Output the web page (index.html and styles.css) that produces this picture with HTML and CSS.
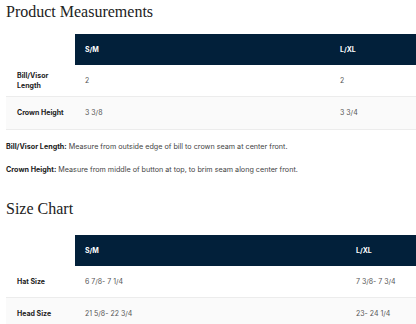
FILE: index.html
```html
<!DOCTYPE html>
<html lang="en">
<head>
<meta charset="UTF-8">
<meta name="viewport" content="width=device-width, initial-scale=1.0">
<title>Size Guide</title>
<link rel="stylesheet" href="styles.css">
</head>
<body>
<div class="guide">
<h2>Product Measurements</h2>
<table class="size-table measure">
    <colgroup><col class="col-label"><col class="col-sm"><col class="col-lxl"></colgroup>
    <thead>
        <tr><th></th><th>S/M</th><th>L/XL</th></tr>
    </thead>
    <tbody>
        <tr><td class="label">Bill/Visor<br>Length</td><td>2</td><td>2</td></tr>
        <tr><td class="label">Crown Height</td><td>3 3/8</td><td>3 3/4</td></tr>
    </tbody>
</table>
<p class="note"><strong>Bill/Visor Length:</strong> Measure from outside edge of bill to crown seam at center front.</p>
<p class="note"><strong>Crown Height:</strong> Measure from middle of button at top, to brim seam along center front.</p>

<h2 class="chart-title">Size Chart</h2>
<table class="size-table chart">
    <colgroup><col class="col-label"><col class="col-sm"><col class="col-lxl"></colgroup>
    <thead>
        <tr><th></th><th>S/M</th><th>L/XL</th></tr>
    </thead>
    <tbody>
        <tr><td class="label">Hat Size</td><td>6 7/8- 7 1/4</td><td>7 3/8- 7 3/4</td></tr>
        <tr><td class="label">Head Size</td><td>21 5/8- 22 3/4</td><td>23- 24 1/4</td></tr>
    </tbody>
</table>
</div>
</body>
</html>
```

FILE: styles.css
```css
body {
    margin: 0;
    padding: 0 0 0 6px;
    background-color: #fff;
    font-family: Inter, "Noto Sans", Arial, sans-serif;
    color: #222;
    overflow: hidden;
}
.guide {
    width: 410px;
}
h2 {
    font-family: "Liberation Serif", "Times New Roman", serif;
    font-weight: normal;
    font-size: 16px;
    line-height: 24px;
    margin: 0;
    color: #222;
}
.chart-title {
    margin-top: 22px;
}
.size-table {
    border-collapse: collapse;
    table-layout: fixed;
    width: 410px;
    font-size: 7px;
    margin-top: 10px;
}
.measure .col-label { width: 69px; }
.measure .col-sm { width: 255px; }
.chart .col-label { width: 69px; }
.chart .col-sm { width: 271px; }
.size-table th {
    background-color: #02203a;
    color: #fff;
    font-weight: bold;
    text-align: left;
    height: 31px;
    padding: 0 10px;
}
.size-table th:first-child {
    background-color: #fff;
}
.size-table td {
    height: 31px;
    padding: 0 10px;
    color: #555;
    line-height: 10px;
    border-bottom: 1px solid #ececec;
}
.size-table td.label {
    padding-left: 11px;
    color: #222;
    font-weight: bold;
}
.size-table tbody tr:nth-child(2) td {
    background-color: #fafafa;
    height: 32px;
}
.note {
    font-size: 7.2px;
    line-height: 10px;
    margin: 12px 0 13px;
    color: #444;
}
.note strong {
    color: #222;
}
.chart {
    margin-top: 14px;
}
```
